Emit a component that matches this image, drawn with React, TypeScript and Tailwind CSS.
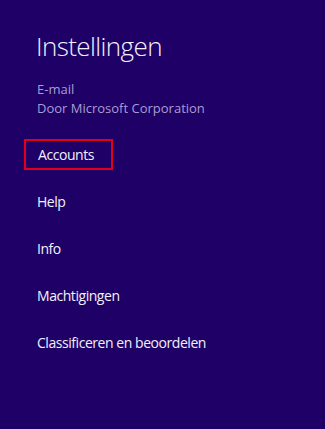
import React from "react";

const items = ["Help", "Info", "Machtigingen", "Classificeren en beoordelen"];

export default function App() {
  return (
    <div
      className="w-[325px] h-[429px] bg-[#1e0066] text-[#f2f0fa] overflow-hidden"
      style={{ fontFamily: '"Open Sans", "Noto Sans", sans-serif' }}
    >
      <div className="pt-[28px] pl-[36px]">
        <h1 className="text-[26px] leading-[36px] font-light tracking-[-0.6px]">Instellingen</h1>
      </div>
      <div className="pl-[37px] pt-[16px] text-[13px] leading-[19px] text-[#a89ed4]">
        <div>E-mail</div>
        <div>Door Microsoft Corporation</div>
      </div>
      <div className="pl-[24px] pt-[21px] flex flex-col gap-[16px] text-[14px] tracking-[-0.45px]">
        <div className="flex items-center h-[31px] w-[89px] border-2 border-[#e0001a] pl-[12px]">
          Accounts
        </div>
        {items.map((t) => (
          <div key={t} className="h-[31px] flex items-center pl-[13px]">
            {t}
          </div>
        ))}
      </div>
    </div>
  );
}
